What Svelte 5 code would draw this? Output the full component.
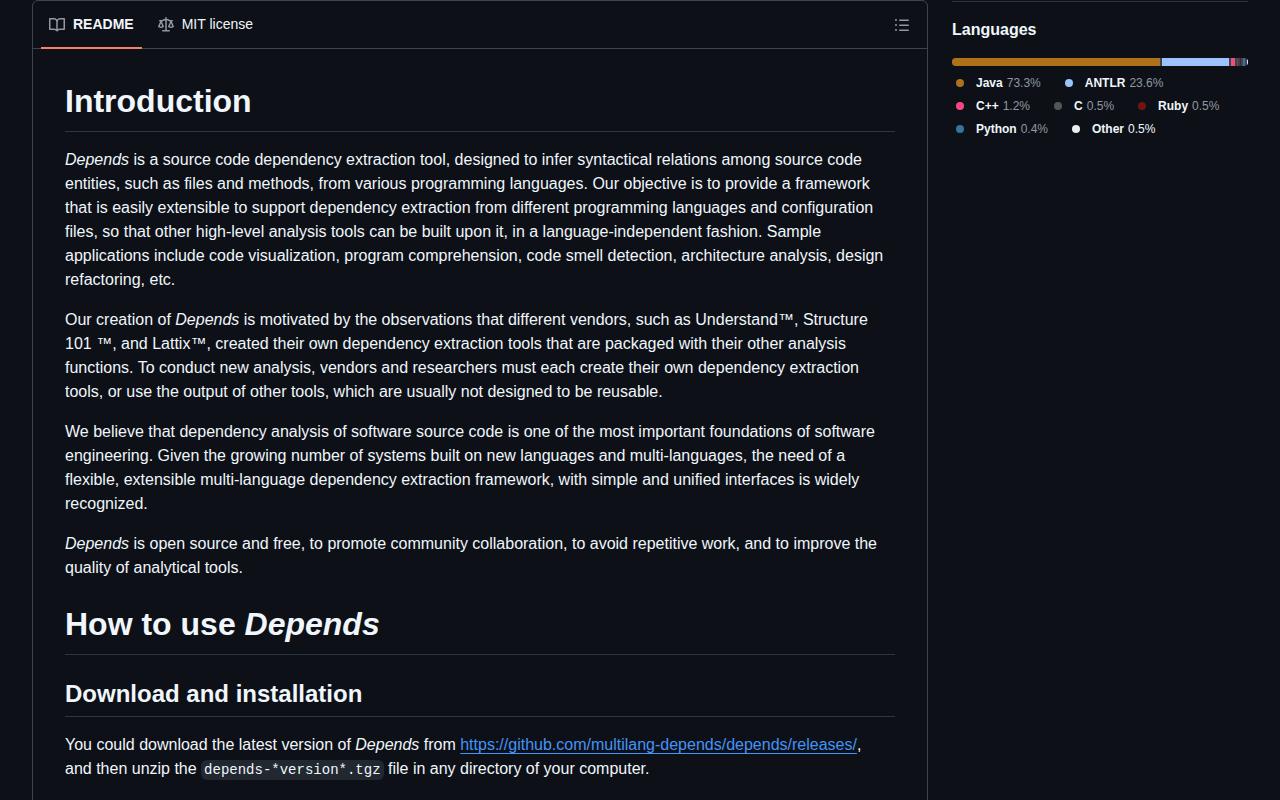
<script>
  const languages = [
    { name: 'Java', share: 73.3, color: '#b07219' },
    { name: 'ANTLR', share: 23.6, color: '#9dc3ff' },
    { name: 'C++', share: 1.2, color: '#f34b7d' },
    { name: 'C', share: 0.5, color: '#555555' },
    { name: 'Ruby', share: 0.5, color: '#701516' },
    { name: 'Python', share: 0.4, color: '#3572a5' },
    { name: 'Other', share: 0.5, color: '#ededed' }
  ];
</script>

<div class="page">
  <main class="panel">
    <header class="bar">
      <nav class="tabs" aria-label="Repository files">
        <a class="tab active" href="#readme" aria-current="page">
          <svg viewBox="0 0 16 16" aria-hidden="true"><path d="M0 1.75A.75.75 0 0 1 .75 1h4.253c1.227 0 2.317.59 3 1.501A3.743 3.743 0 0 1 11.006 1h4.245a.75.75 0 0 1 .75.75v10.5a.75.75 0 0 1-.75.75h-4.507a2.25 2.25 0 0 0-1.591.659l-.622.621a.75.75 0 0 1-1.06 0l-.622-.621A2.25 2.25 0 0 0 5.258 13H.75a.75.75 0 0 1-.75-.75Zm7.251 10.324.004-5.073-.002-2.253A2.25 2.25 0 0 0 5.003 2.5H1.5v9h3.757a3.75 3.75 0 0 1 1.994.574ZM8.755 4.75l-.004 7.322a3.752 3.752 0 0 1 1.992-.572H14.5v-9h-3.495a2.25 2.25 0 0 0-2.25 2.25Z" /></svg>
          <span>README</span>
        </a>
        <a class="tab" href="#license">
          <svg viewBox="0 0 16 16" aria-hidden="true"><path d="M8.75.75V2h.985c.304 0 .603.08.867.231l1.29.736c.038.022.08.033.124.033h2.234a.75.75 0 0 1 0 1.5h-.427l2.111 4.692a.75.75 0 0 1-.154.838l-.53-.53.529.531-.001.002-.002.002-.006.006-.006.005-.01.01-.045.04c-.21.176-.441.327-.686.45C14.556 10.78 13.88 11 13 11a4.498 4.498 0 0 1-2.023-.454 3.544 3.544 0 0 1-.686-.45l-.045-.04-.016-.015-.006-.006-.004-.004v-.001a.75.75 0 0 1-.154-.838L12.178 4.5h-.162c-.305 0-.604-.079-.868-.231l-1.29-.736a.245.245 0 0 0-.124-.033H8.75V13h2.5a.75.75 0 0 1 0 1.5h-6.5a.75.75 0 0 1 0-1.5h2.5V3.5h-.984a.245.245 0 0 0-.124.033l-1.289.737c-.265.15-.564.23-.869.23h-.162l2.112 4.692a.75.75 0 0 1-.154.838l-.53-.53.529.531-.001.002-.002.002-.006.006-.016.015-.045.04c-.21.176-.441.327-.686.45C4.556 10.78 3.88 11 3 11a4.498 4.498 0 0 1-2.023-.454 3.544 3.544 0 0 1-.686-.45l-.045-.04-.016-.015-.006-.006-.004-.004v-.001a.75.75 0 0 1-.154-.838L2.178 4.5H1.75a.75.75 0 0 1 0-1.5h2.234a.249.249 0 0 0 .125-.033l1.288-.737c.265-.15.564-.23.869-.23h.984V.75a.75.75 0 0 1 1.5 0Zm2.945 8.477c.285.135.718.273 1.305.273s1.02-.138 1.305-.273L13 6.327Zm-10 0c.285.135.718.273 1.305.273s1.02-.138 1.305-.273L3 6.327Z" /></svg>
          <span>MIT license</span>
        </a>
      </nav>
      <button class="outline" type="button" aria-label="Outline">
        <svg viewBox="0 0 16 16" aria-hidden="true"><path d="M5.75 2.5h8.5a.75.75 0 0 1 0 1.5h-8.5a.75.75 0 0 1 0-1.5Zm0 5h8.5a.75.75 0 0 1 0 1.5h-8.5a.75.75 0 0 1 0-1.5Zm0 5h8.5a.75.75 0 0 1 0 1.5h-8.5a.75.75 0 0 1 0-1.5ZM2 14a1 1 0 1 1 0-2 1 1 0 0 1 0 2Zm1-6a1 1 0 1 1-2 0 1 1 0 0 1 2 0ZM2 4a1 1 0 1 1 0-2 1 1 0 0 1 0 2Z" /></svg>
      </button>
    </header>

    <article id="readme">
      <h1>Introduction</h1>
      <p><em>Depends</em> is a source code dependency extraction tool, designed to infer syntactical relations among source code entities, such as files and methods, from various programming languages. Our objective is to provide a framework that is easily extensible to support dependency extraction from different programming languages and configuration files, so that other high-level analysis tools can be built upon it, in a language-independent fashion. Sample applications include code visualization, program comprehension, code smell detection, architecture analysis, design refactoring, etc.</p>
      <p>Our creation of <em>Depends</em> is motivated by the observations that different vendors, such as Understand™, Structure 101 ™, and Lattix™, created their own dependency extraction tools that are packaged with their other analysis functions. To conduct new analysis, vendors and researchers must each create their own dependency extraction tools, or use the output of other tools, which are usually not designed to be reusable.</p>
      <p>We believe that dependency analysis of software source code is one of the most important foundations of software engineering. Given the growing number of systems built on new languages and multi-languages, the need of a flexible, extensible multi-language dependency extraction framework, with simple and unified interfaces is widely recognized.</p>
      <p><em>Depends</em> is open source and free, to promote community collaboration, to avoid repetitive work, and to improve the quality of analytical tools.</p>
      <h1>How to use <em>Depends</em></h1>
      <h2>Download and installation</h2>
      <p>You could download the latest version of <em>Depends</em> from <a href="https://github.com/multilang-depends/depends/releases/">https://github.com/multilang-depends/depends/releases/</a>,<br />and then unzip the <code>depends-*version*.tgz</code> file in any directory of your computer.</p>
    </article>
  </main>

  <aside>
    <h2>Languages</h2>
    <div class="meter">
      {#each languages as lang}
        <span style="width: {lang.share}%; background-color: {lang.color}"></span>
      {/each}
    </div>
    <ul>
      {#each languages as lang}
        <li class:other={lang.name === 'Other'}>
          <i style="background-color: {lang.color}"></i>
          <b>{lang.name}</b>
          <span>{lang.share}%</span>
        </li>
      {/each}
    </ul>
  </aside>
</div>

<style>
  :global(body) {
    background: #0d1117;
    color: #f0f6fc;
    font: 14px/21px "Liberation Sans", Arial, sans-serif;
  }
  :global(html) { scrollbar-width: none; }
  .page {
    display: grid;
    grid-template-columns: minmax(0, 1fr) 296px;
    gap: 24px;
    max-width: 1216px;
    margin: 0 auto;
    padding: 0 32px;
  }
  .panel {
    border: 1px solid #3d444d;
    border-radius: 6px;
  }
  .bar {
    display: flex;
    align-items: center;
    justify-content: space-between;
    padding: 0 8px;
    border-bottom: 1px solid #3d444d;
  }
  .tabs { display: flex; gap: 8px; }
  .tab {
    display: flex;
    align-items: center;
    gap: 8px;
    height: 48px;
    margin-bottom: -1px;
    padding: 1px 8px 0;
    border-bottom: 2px solid transparent;
    color: #f0f6fc;
    text-decoration: none;
    box-sizing: border-box;
  }
  .active {
    font-weight: 600;
    border-color: #f78166;
  }
  svg { width: 16px; height: 16px; fill: #9198a1; display: block; }
  .outline {
    display: grid;
    place-items: center;
    width: 34px;
    height: 28px;
    padding: 0;
    border: 0;
    background: none;
  }
  article {
    padding: 32px;
    font-size: 16px;
    line-height: 24px;
  }
  article h1, article h2 {
    margin: 24px 0 16px;
    border-bottom: 1px solid #2f353d;
    font-weight: 600;
  }
  article h1 { padding-bottom: 10px; font-size: 32px; line-height: 40px; }
  article h2 { padding-bottom: 7px; font-size: 24px; line-height: 30px; }
  article h1:first-child { margin-top: 0; }
  p { margin: 0 0 16px; }
  p a { color: #4493f8; text-decoration: underline; text-underline-offset: 3px; }
  code {
    padding: 2px 3px;
    border-radius: 6px;
    background: #212830;
    font: 14px "Liberation Mono", monospace;
  }
  aside { border-top: 1px solid #2f353d; margin-top: 1px; height: max-content; }
  aside h2 { margin: 16px 0; font-size: 16px; line-height: 24px; font-weight: 600; }
  .meter {
    display: flex;
    gap: 2px;
    height: 8px;
    border-radius: 6px;
    overflow: hidden;
    margin-bottom: 8px;
    background: #3d444d;
  }
  ul {
    display: flex;
    flex-wrap: wrap;
    margin: 0;
    padding: 0;
    list-style: none;
    font-size: 12px;
    line-height: 18px;
  }
  li { display: flex; align-items: center; margin: 0 20px 5px 4px; }
  i { width: 8px; height: 8px; margin-right: 12px; border-radius: 50%; }
  li b { margin-right: 4px; }
  li span { color: #9198a1; }
  .other span { color: #f0f6fc; }
</style>
